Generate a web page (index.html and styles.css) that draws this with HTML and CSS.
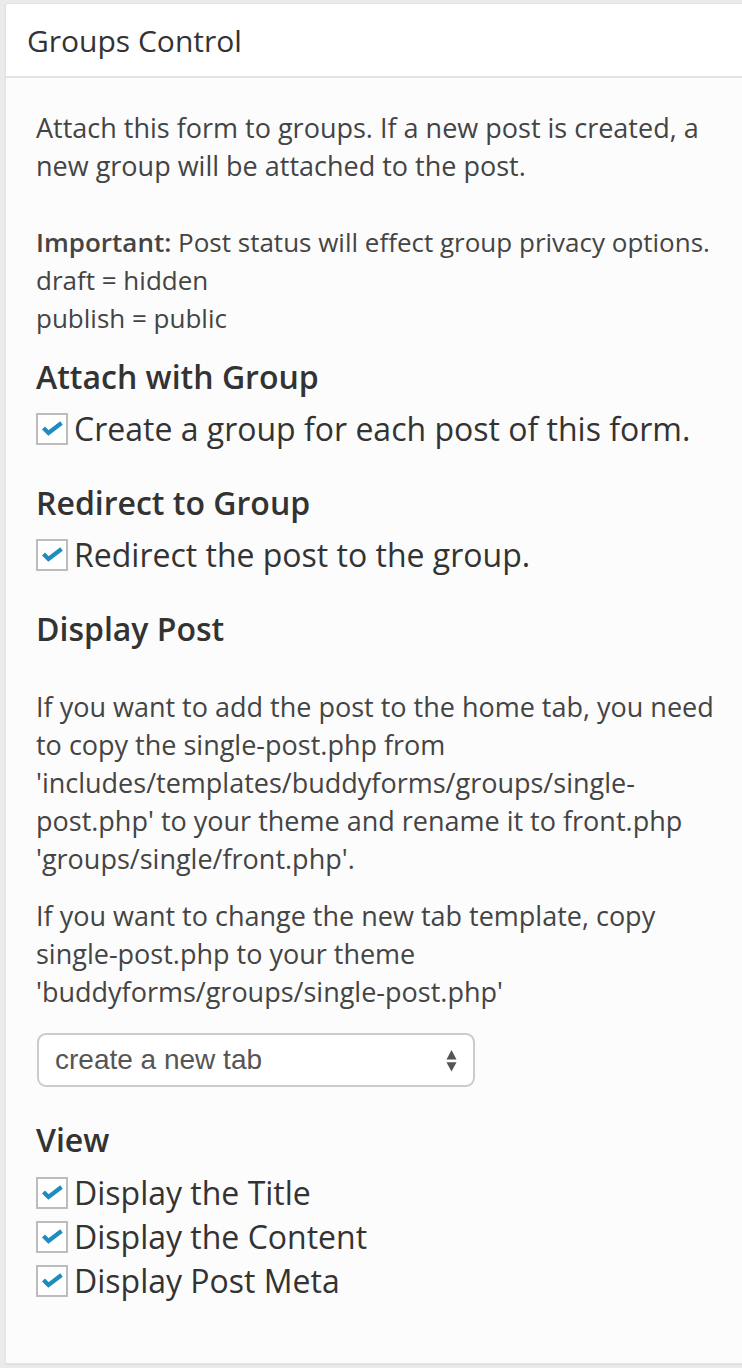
FILE: index.html
```html
<!DOCTYPE html>
<html>
<head>
<meta charset="utf-8">
<link rel="stylesheet" href="styles.css">
</head>
<body>
<div class="panel">
  <div class="panel-header">Groups Control</div>
  <div class="panel-body">
    <p class="p-first">Attach this form to groups. If a new post is created, a new group will be attached to the post.</p>
    <p class="p-important"><strong>Important:</strong> Post status will effect group privacy options.<br>draft = hidden<br>publish = public</p>

    <h4 class="section-title">Attach with Group</h4>
    <label class="check-row">
      <span class="checkbox"><svg viewBox="0 0 28 28" class="tick"><polyline points="5.5,13 10.5,18 23.5,8"/></svg></span>
      <span class="check-label">Create a group for each post of this form.</span>
    </label>

    <h4 class="section-title gap-top">Redirect to Group</h4>
    <label class="check-row">
      <span class="checkbox"><svg viewBox="0 0 28 28" class="tick"><polyline points="5.5,13 10.5,18 23.5,8"/></svg></span>
      <span class="check-label">Redirect the post to the group.</span>
    </label>

    <h4 class="section-title gap-top">Display Post</h4>
    <p class="p-display">If you want to add the post to the home tab, you need to copy the single-post.php from 'includes/templates/buddyforms/groups/single-post.php' to your theme and rename it to front.php 'groups/single/front.php'.</p>
    <p class="p-tab">If you want to change the new tab template, copy single-post.php to your theme 'buddyforms/groups/single-post.php'</p>

    <div class="select">
      <span class="select-text">create a new tab</span>
      <svg viewBox="0 0 12 26" class="arrows"><path d="M6 1.5 L11.5 12 L0.5 12 Z"/><path d="M0.5 15 L11.5 15 L6 25 Z"/></svg>
    </div>

    <h4 class="section-title view-title">View</h4>
    <div class="view-list">
      <label class="check-row">
        <span class="checkbox"><svg viewBox="0 0 28 28" class="tick"><polyline points="5.5,13 10.5,18 23.5,8"/></svg></span>
        <span class="check-label">Display the Title</span>
      </label>
      <label class="check-row">
        <span class="checkbox"><svg viewBox="0 0 28 28" class="tick"><polyline points="5.5,13 10.5,18 23.5,8"/></svg></span>
        <span class="check-label">Display the Content</span>
      </label>
      <label class="check-row">
        <span class="checkbox"><svg viewBox="0 0 28 28" class="tick"><polyline points="5.5,13 10.5,18 23.5,8"/></svg></span>
        <span class="check-label">Display Post Meta</span>
      </label>
    </div>
  </div>
</div>
</body>
</html>
```
FILE: styles.css
```css
html, body {
  margin: 0;
  padding: 0;
}
body {
  background: #ebebeb;
  font-family: "Open Sans", "Noto Sans", sans-serif;
  color: #444;
  padding: 3px 0 4px 5px;
}
.panel {
  background: #fcfcfc;
  border: 1px solid #e2e2e2;
  border-right: none;
  border-radius: 3px 0 0 0;
  box-shadow: 0 1px 2px rgba(0,0,0,0.06);
  min-height: 1358px;
  box-sizing: border-box;
}
.panel-header {
  background: #fff;
  height: 72px;
  line-height: 74px;
  padding-left: 21px;
  font-size: 30px;
  color: #333;
  border-bottom: 2px solid #e3e3e3;
  border-radius: 3px 0 0 0;
}
.panel-body {
  padding: 31px 18px 60px 30px;
}
p {
  margin: 0;
  font-size: 27px;
  line-height: 38px;
}
.p-first {
  margin-bottom: 38px;
}
.p-important {
  font-size: 26px;
}
.p-important strong {
  font-weight: 600;
}
.section-title {
  margin: 21px 0 11px;
  font-size: 32px;
  line-height: 38px;
  font-weight: 600;
  color: #333;
}
.section-title.gap-top {
  margin-top: 33px;
}
.check-row {
  display: flex;
  align-items: center;
  height: 44px;
  gap: 6px;
}
.checkbox {
  width: 32px;
  height: 32px;
  box-sizing: border-box;
  border: 2px solid #bcbcbc;
  background: #fff;
  flex: none;
}
.tick {
  width: 28px;
  height: 28px;
  display: block;
  fill: none;
  stroke: #1e8cbe;
  stroke-width: 4.2;
  stroke-linejoin: miter;
}
.check-label {
  font-size: 32px;
  line-height: 44px;
  color: #333;
}
.p-display {
  margin-top: 40px;
  margin-bottom: 19px;
}
.select {
  margin-top: 22px;
  margin-left: 1px;
  width: 438px;
  height: 54px;
  box-sizing: border-box;
  border: 2px solid #cbcbcb;
  border-radius: 9px;
  background: #fff;
  display: flex;
  align-items: center;
  justify-content: space-between;
  padding: 0 16px 0 16px;
}
.select-text {
  font-family: "Liberation Sans", Arial, sans-serif;
  font-size: 28px;
  color: #555;
}
.arrows {
  width: 11px;
  height: 25px;
  fill: #555;
  display: block;
}
.view-title {
  margin-top: 34px;
  margin-bottom: 12px;
}
```
